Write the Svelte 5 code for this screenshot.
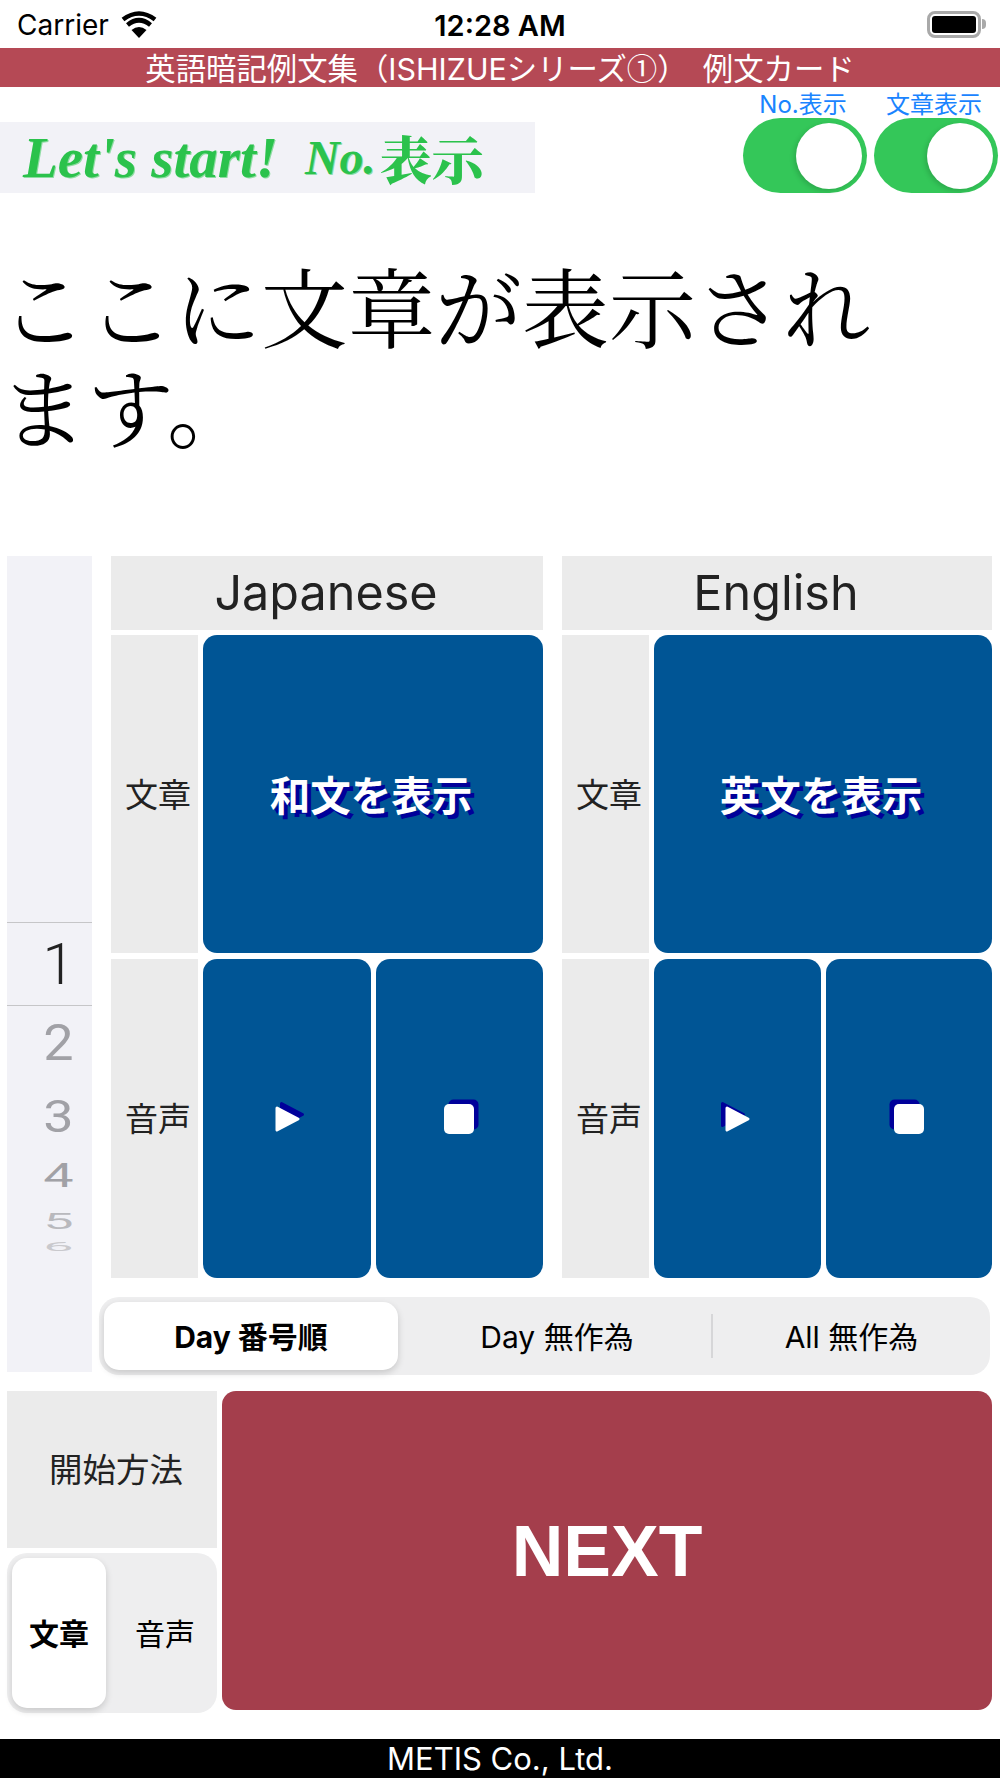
<script>
  const columns = [
    { title: 'Japanese', show: '和文を表示', side: 'right' },
    { title: 'English', show: '英文を表示', side: 'left' }
  ];
  const wheel = ['n2', 'n3', 'n4', 'n5', 'n6'];
  const order = ['Day 番号順', 'Day 無作為', 'All 無作為'];
</script>

{#snippet play(dx)}
  <svg class="icon" viewBox="0 0 40 40" aria-hidden="true">
    <path class="ic-shadow" transform="translate({dx} -4.5)" d="M10 9 L31 20 L10 31 Z" />
    <path class="ic-white" d="M10 9 L31 20 L10 31 Z" />
  </svg>
{/snippet}

{#snippet stop(dx)}
  <svg class="icon" viewBox="0 0 40 40" aria-hidden="true">
    <rect class="ic-shadow" x={5 + dx} y="0.5" width="30" height="30" rx="5" />
    <rect class="ic-white" x="5" y="5" width="30" height="30" rx="5" />
  </svg>
{/snippet}

<div class="page">
  <header class="status">
    <div class="carrier">
      <span>Carrier</span>
      <svg class="wifi" viewBox="0 0 36 27" aria-hidden="true">
        <path d="M18 27 L10.5 19 Q18 13 25.5 19 Z" />
        <path class="arc" d="M6.5 14 Q18 4.5 29.5 14" />
        <path class="arc" d="M2 8.5 Q18 -3.5 34 8.5" />
      </svg>
    </div>
    <div class="clock">12:28 AM</div>
    <div class="battery"><span class="cell"></span><span class="nub"></span></div>
  </header>

  <div class="title">英語暗記例文集（ISHIZUEシリーズ<span class="circled">①</span>）　例文カード</div>

  <div class="top">
    <div class="logo"><span class="script">Let's start!</span><span class="script no">No.</span><span class="hyoji">表示</span></div>
    <div class="toggles">
      <div class="toggle"><span>No.表示</span><div class="switch"><i></i></div></div>
      <div class="toggle"><span>文章表示</span><div class="switch"><i></i></div></div>
    </div>
  </div>

  <p class="sentence">ここに文章が表示されます。</p>

  <section class="board">
    <div class="picker">
      <div class="current">1</div>
      {#each wheel as cls, i}
        <div class="num {cls}"><span>{i + 2}</span></div>
      {/each}
    </div>

    <div class="right">
      <div class="cols">
        {#each columns as col}
          <div class="col">
            <div class="head">{col.title}</div>
            <div class="cells">
              <div class="label">文章</div>
              <button class="btn wide">{col.show}</button>
              <div class="label">音声</div>
              <button class="btn">{@render play(col.side === 'right' ? 4.5 : -4.5)}</button>
              <button class="btn">{@render stop(col.side === 'right' ? 4.5 : -4.5)}</button>
            </div>
          </div>
        {/each}
      </div>

      <div class="seg order">
        {#each order as item, i}
          <div class="seg-item" class:active={i === 0} class:divided={i === 2}>{item}</div>
        {/each}
      </div>
    </div>
  </section>

  <section class="bottom">
    <div class="start">
      <div class="start-label">開始方法</div>
      <div class="seg mode">
        <div class="seg-item active">文章</div>
        <div class="seg-item">音声</div>
      </div>
    </div>
    <button class="next">NEXT</button>
  </section>

  <footer class="footer">METIS Co., Ltd.</footer>
</div>

<style>
  :global(body) {
    margin: 0;
    background: #fff;
  }

  .page {
    width: 1000px;
    height: 1778px;
    overflow: hidden;
    font-family: Inter, "Noto Sans CJK JP", sans-serif;
    color: #000;
  }

  /* status bar */
  .status {
    height: 48px;
    display: grid;
    grid-template-columns: 1fr auto 1fr;
    align-items: center;
    font-size: 28px;
    padding: 2px 14px 0 17px;
    box-sizing: border-box;
  }

  .carrier {
    display: flex;
    align-items: center;
    gap: 12px;
    font-weight: 400;
  }

  .wifi {
    width: 36px;
    height: 27px;
    margin-top: -2px;
  }

  .wifi .arc {
    fill: none;
    stroke: #000;
    stroke-width: 4.6;
  }

  .clock {
    font-weight: 600;
    font-size: 29px;
    margin-left: -3px;
  }

  .battery {
    justify-self: end;
    display: flex;
    align-items: center;
    gap: 1px;
    margin-top: -2px;
  }

  .cell {
    width: 54px;
    height: 27px;
    box-sizing: border-box;
    border: 3px solid #a9a9a9;
    border-radius: 8px;
    padding: 2px;
    display: block;
    background: #000;
    background-clip: content-box;
  }

  .nub {
    width: 4px;
    height: 10px;
    background: #a9a9a9;
    border-radius: 0 4px 4px 0;
  }

  .title {
    height: 39px;
    background: #b54955;
    color: #fff;
    font-size: 30.4px;
    line-height: 39px;
    text-align: center;
    white-space: nowrap;
  }

  .circled {
    font-family: "Noto Sans CJK JP", sans-serif;
  }

  /* logo + switches */
  .top {
    height: 106px;
    display: flex;
    justify-content: space-between;
    align-items: flex-end;
  }

  .logo {
    width: 535px;
    height: 71px;
    background: #f2f2f7;
    display: flex;
    align-items: center;
    padding-left: 23px;
    box-sizing: border-box;
    color: #2bc24c;
    white-space: nowrap;
  }

  .script {
    font-family: "Liberation Serif", serif;
    font-style: italic;
    font-weight: 700;
    font-size: 57px;
    line-height: 1;
    text-shadow: 1px 1px 0 #8fdca3;
  }

  .no {
    font-size: 48px;
    margin-left: 27px;
  }

  .hyoji {
    font-family: "Noto Serif CJK JP", "Noto Sans CJK JP", serif;
    font-weight: 900;
    font-size: 52px;
    margin-left: 4px;
    line-height: 1;
  }

  .toggles {
    display: flex;
    gap: 7px;
    padding-right: 2px;
  }

  .toggle {
    width: 124px;
    display: flex;
    flex-direction: column;
    align-items: center;
    color: #1a84ff;
    font-size: 24px;
    line-height: 26px;
    white-space: nowrap;
  }

  .toggle span {
    margin-right: 4px;
  }

  .switch {
    width: 124px;
    height: 75px;
    border-radius: 38px;
    background: #34c759;
    display: flex;
    justify-content: flex-end;
    align-items: center;
    padding-right: 5px;
    box-sizing: border-box;
  }

  .switch i {
    width: 66px;
    height: 66px;
    border-radius: 50%;
    background: #fff;
    box-shadow: -2px 2px 5px rgba(0, 0, 0, 0.15);
  }

  .sentence {
    margin: 0;
    height: 363px;
    box-sizing: border-box;
    padding: 62px 0 0;
    width: 900px;
    font-family: "Noto Serif CJK JP", "Noto Sans CJK JP", serif;
    font-weight: 400;
    font-size: 87px;
    line-height: 100px;
  }

  /* main board */
  .board {
    display: flex;
    padding: 0 8px 0 7px;
    gap: 7px;
    height: 819px;
  }

  .picker {
    width: 85px;
    height: 816px;
    background: #f2f2f7;
    padding-top: 366px;
    box-sizing: border-box;
    text-align: center;
    font-family: Roboto, sans-serif;
    font-weight: 400;
  }

  .current {
    height: 84px;
    box-sizing: border-box;
    border-top: 1px solid #c6c6c8;
    border-bottom: 1px solid #c6c6c8;
    font-size: 58px;
    font-weight: 300;
    line-height: 82px;
    color: #222;
    padding-left: 18px;
  }

  .num {
    font-size: 54px;
    color: #a1a1a6;
    display: flex;
    align-items: center;
    justify-content: center;
    padding-left: 18px;
    box-sizing: border-box;
  }

  .num span {
    display: block;
    line-height: 1;
  }

  .n2 { height: 72px; padding-top: 2px; }
  .n2 span { transform: scaleY(0.92); }
  .n3 { height: 74px; padding-top: 3px; }
  .n3 span { transform: scaleY(0.82); }
  .n4 { height: 48px; }
  .n4 span { transform: scaleY(0.6); }
  .n5 { height: 42px; color: #b9b9bd; }
  .n5 span { transform: scaleY(0.42); }
  .n6 { height: 10px; color: #c9c9cd; }
  .n6 span { transform: scaleY(0.24); }

  .right {
    flex: 1;
  }

  .cols {
    display: grid;
    grid-template-columns: 432px 430px;
    gap: 19px;
    padding-left: 12px;
  }

  .head {
    height: 74px;
    background: #ebebeb;
    color: #222;
    font-size: 48.5px;
    line-height: 74px;
    text-align: center;
    margin-bottom: 5px;
    padding-right: 2px;
    box-sizing: border-box;
  }

  .cells {
    display: grid;
    grid-template-columns: 87px 1fr 1fr;
    grid-template-rows: 318px 319px;
    column-gap: 5px;
    row-gap: 6px;
  }

  .label {
    background: #ebebeb;
    color: #222;
    font-size: 33px;
    display: flex;
    align-items: center;
    justify-content: center;
    padding: 0 0 3px 7px;
    white-space: nowrap;
  }

  .btn {
    border: none;
    padding: 0;
    border-radius: 14px;
    background: #005595;
    color: #fff;
    font-family: inherit;
    font-weight: 700;
    font-size: 40.5px;
    text-shadow: 4px 4px 0 #00009a;
    display: flex;
    align-items: center;
    justify-content: center;
  }

  .wide {
    grid-column: span 2;
    padding: 0 4px 2px 0;
  }

  .icon {
    width: 40px;
    height: 40px;
    overflow: visible;
  }

  .ic-shadow {
    fill: #00009a;
    stroke: #00009a;
  }

  .ic-white {
    fill: #fff;
    stroke: #fff;
  }

  path.ic-shadow,
  path.ic-white {
    stroke-width: 3;
    stroke-linejoin: round;
  }

  rect.ic-shadow,
  rect.ic-white {
    stroke-width: 0;
  }

  /* segmented controls */
  .seg {
    background: #eeeeef;
    display: flex;
    box-sizing: border-box;
    padding: 5px;
  }

  .order {
    height: 78px;
    margin: 19px 2px 0 0;
    border-radius: 20px;
  }

  .order .seg-item:nth-child(1) { flex: 0 0 294px; }
  .order .seg-item:nth-child(2) { flex: 0 0 313px; padding-left: 5px; }
  .order .seg-item:nth-child(3) { padding-left: 7px; }

  .mode {
    height: 160px;
    border-radius: 20px;
    margin-top: 5px;
  }

  .mode .seg-item:nth-child(1) { flex: 0 0 94px; }
  .mode .seg-item:nth-child(2) { padding-left: 12px; }

  .seg-item {
    flex: 1;
    display: flex;
    align-items: center;
    justify-content: center;
    font-size: 30px;
    font-weight: 400;
    border-radius: 15px;
    position: relative;
    padding-bottom: 2px;
    box-sizing: border-box;
    white-space: nowrap;
  }

  .seg-item.active {
    background: #fff;
    font-weight: 700;
    box-shadow: 0 3px 7px rgba(0, 0, 0, 0.16);
  }

  .divided::before {
    content: '';
    position: absolute;
    left: 0;
    top: 12px;
    bottom: 12px;
    width: 2px;
    background: #d6d6d8;
  }

  /* bottom block */
  .bottom {
    display: flex;
    gap: 5px;
    padding: 16px 8px 0 7px;
  }

  .start {
    width: 210px;
  }

  .start-label {
    height: 157px;
    background: #ebebeb;
    color: #222;
    font-size: 33.5px;
    display: flex;
    align-items: center;
    justify-content: center;
    padding: 0 0 4px 8px;
    box-sizing: border-box;
  }

  .next {
    flex: 1;
    height: 319px;
    border: none;
    border-radius: 14px;
    background: #a43e4c;
    color: #fff;
    font-family: "Liberation Sans", sans-serif;
    font-weight: 700;
    font-size: 71.5px;
    padding: 0;
  }

  .footer {
    margin-top: 26px;
    height: 39px;
    background: #000;
    color: #fff;
    font-size: 31px;
    line-height: 39px;
    text-align: center;
  }
</style>
